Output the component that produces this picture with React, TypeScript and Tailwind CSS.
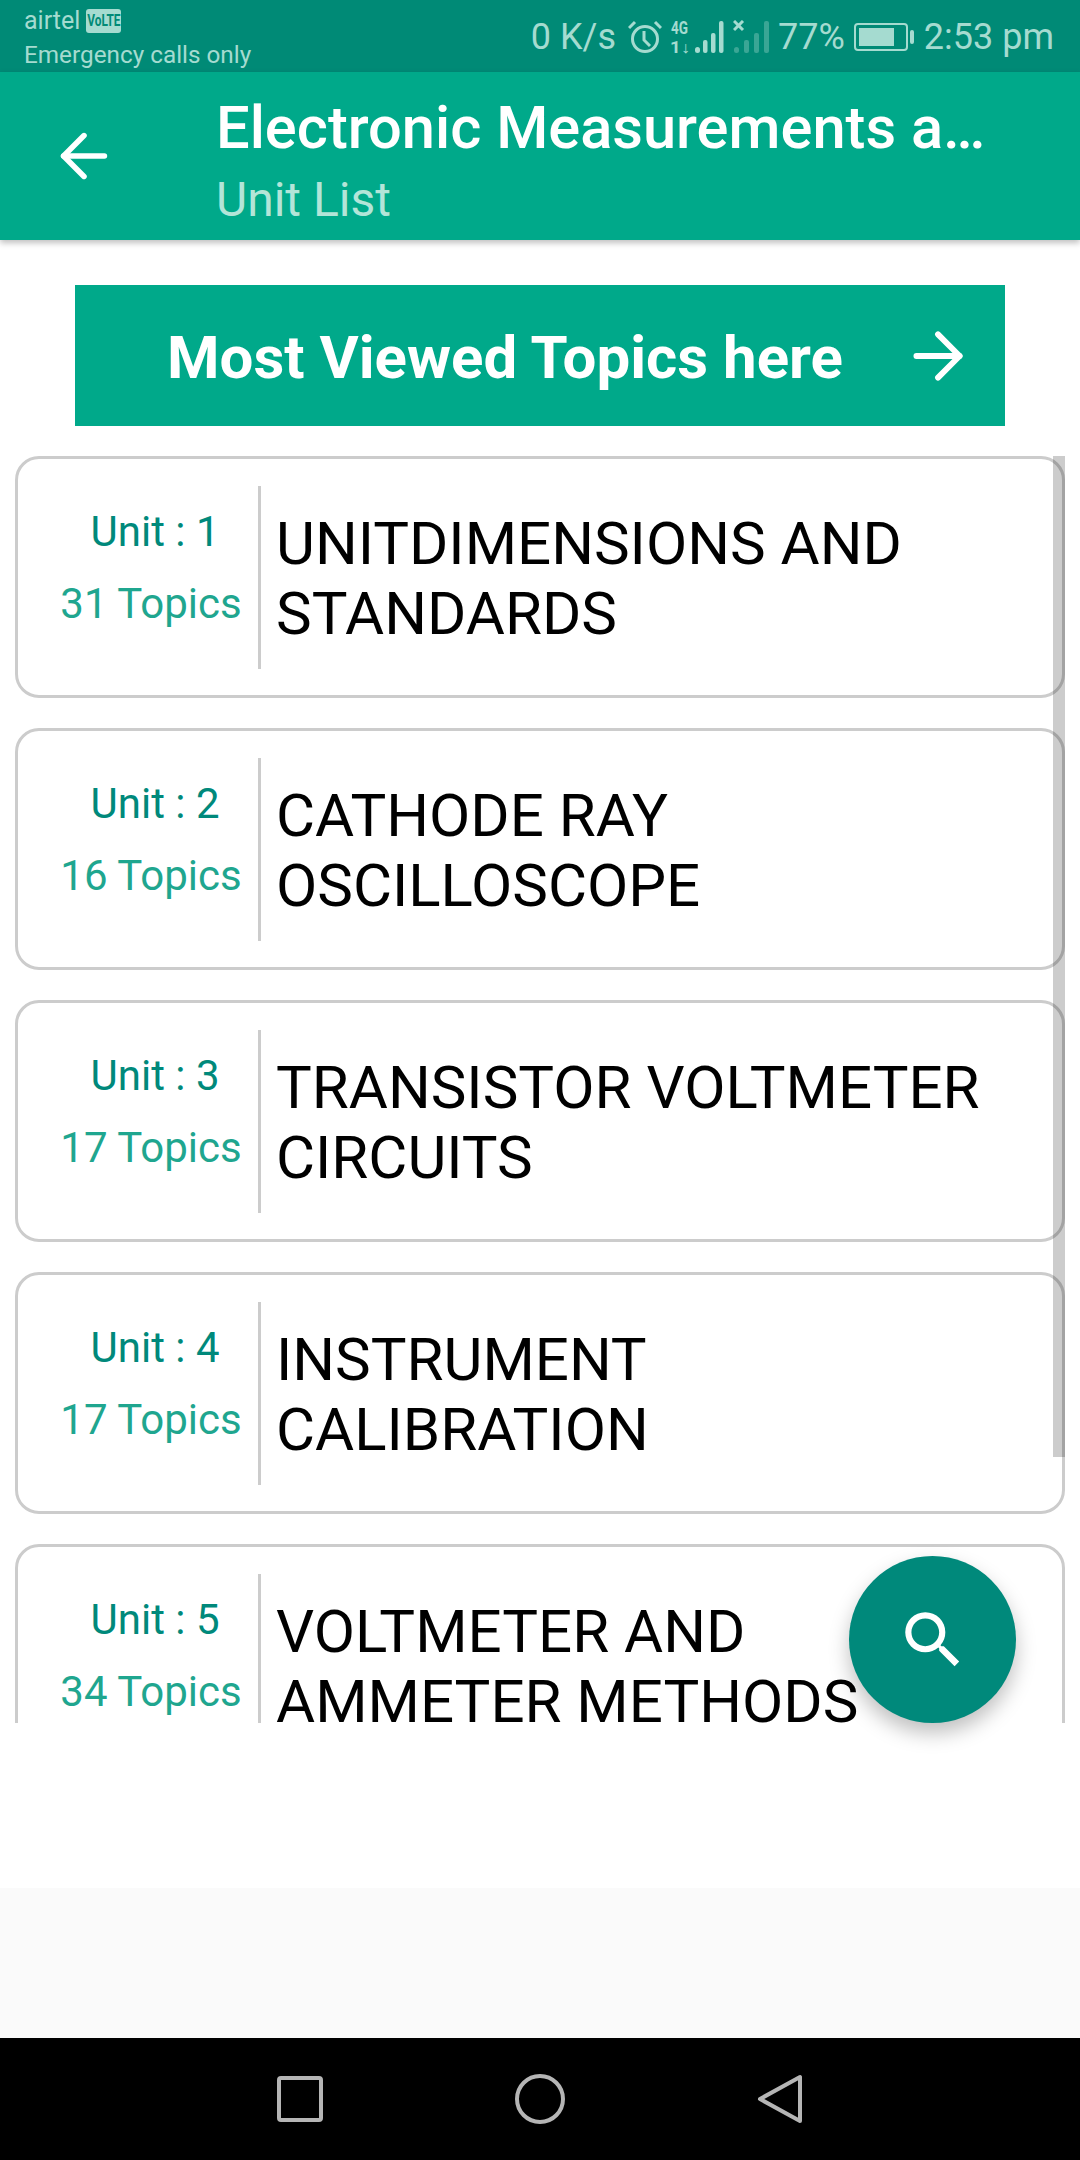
import { ArrowLeft, ArrowRight } from "lucide-react";

const units = [
    { unit: 1, topics: 31, title: "UNITDIMENSIONS AND STANDARDS" },
    { unit: 2, topics: 16, title: "CATHODE RAY OSCILLOSCOPE" },
    { unit: 3, topics: 17, title: "TRANSISTOR VOLTMETER CIRCUITS" },
    { unit: 4, topics: 17, title: "INSTRUMENT CALIBRATION" },
    { unit: 5, topics: 34, title: "VOLTMETER AND AMMETER METHODS" },
];

function StatusIcons() {
    return (
        <div className="flex items-center">
            {/* alarm */}
            <svg width="34" height="34" viewBox="0 0 34 34" fill="none" stroke="#a5dbd0" strokeWidth="3" className="ml-[12px]">
                <circle cx="17" cy="19" r="12.5" />
                <path d="M16 11v9l6 6M1 8l6-6M33 8l-6-6" />
            </svg>
            {/* 4G signal */}
            <svg width="54" height="34" viewBox="0 0 54 34" className="ml-[8px]" fill="#a5dbd0">
                <text x="1" y="14" fontSize="19" fontWeight="700" fontFamily="Roboto, sans-serif" textLength="17" lengthAdjust="spacingAndGlyphs">4G</text>
                <text x="0" y="33" fontSize="16" fontWeight="700" fontFamily="Roboto, sans-serif" textLength="20" lengthAdjust="spacingAndGlyphs">1↓</text>
                <rect x="25" y="27" width="5" height="6" rx="2.5" />
                <rect x="33" y="20" width="4.5" height="13" rx="2" />
                <rect x="41" y="13" width="4.5" height="20" rx="2" />
                <rect x="49" y="1" width="4.5" height="32" rx="2" />
            </svg>
            {/* second signal, no sim */}
            <svg width="38" height="34" viewBox="0 0 38 34" className="ml-[9px]" fill="#a5dbd0">
                <path d="M1 1l9 9M10 1l-9 9" stroke="#a5dbd0" strokeWidth="3" />
                <g opacity="0.35">
                    <rect x="1" y="27" width="5" height="6" rx="2.5" />
                    <rect x="11" y="20" width="5" height="13" rx="2" />
                    <rect x="21" y="13" width="5" height="20" rx="2" />
                    <rect x="31" y="1" width="5" height="32" rx="2" />
                </g>
            </svg>
        </div>
    );
}

function StatusBar() {
    return (
        <div className="flex h-[72px] items-center justify-between bg-[#008a76] pr-[26px] pl-6 text-[#a5dbd0]">
            <div className="flex flex-col">
                <div className="flex h-[36px] items-center text-[25px] leading-none">
                    airtel
                    <span className="ml-[6px] flex h-[24px] w-[35px] items-center justify-center rounded-[3px] bg-[#a5dbd0] text-[17px] leading-none font-bold text-[#008a76]">
                        <span className="scale-x-[0.7] whitespace-nowrap">VoLTE</span>
                    </span>
                </div>
                <div className="mt-[1px] text-[24.3px] leading-[30px]">Emergency calls only</div>
            </div>
            <div className="flex items-center pt-[2px] text-[36px] leading-none">
                <span>0 K/s</span>
                <StatusIcons />
                <span className="ml-[7px]">77%</span>
                <div className="ml-[9px] flex items-center">
                    <div className="h-[28px] w-[54px] rounded-[4px] border-2 border-[#a5dbd0] p-[3px]">
                        <div className="h-full w-[35px] bg-[#a5dbd0]" />
                    </div>
                    <div className="ml-[2px] h-[14px] w-[4px] rounded-sm bg-[#a5dbd0]" />
                </div>
                <span className="ml-[10px]">2:53 pm</span>
            </div>
        </div>
    );
}

function AppBar() {
    return (
        <div className="relative z-10 flex h-[168px] items-center bg-[#00a98a] shadow-[0_3px_6px_rgba(0,0,0,0.25)]">
            <div className="flex w-[216px] shrink-0 pl-[49px]">
                <ArrowLeft size={70} color="#ffffff" strokeWidth={1.9} />
            </div>
            <div className="min-w-0 pt-[11px]">
                <div className="text-[59.6px] leading-[70px] font-medium whitespace-nowrap text-white">
                    Electronic Measurements a…
                </div>
                <div className="mt-[7px] text-[48px] leading-[60px] text-[#b3e5d8]">Unit List</div>
            </div>
        </div>
    );
}

function UnitCard({ unit, topics, title }: { unit: number; topics: number; title: string }) {
    return (
        <div className="mx-[15px] mb-[30px] flex h-[242px] shrink-0 items-center rounded-[24px] border-[3px] border-[#cccccc] bg-white">
            <div className="w-[240px] shrink-0 pb-[18px] pl-[26px] text-center text-[42px] whitespace-nowrap">
                <div className="pl-[8px] leading-[50px] text-[#00897b]">Unit : {unit}</div>
                <div className="mt-[22px] leading-[50px] text-[#1fa68f]">{topics} Topics</div>
            </div>
            <div className="h-[183px] w-[3px] shrink-0 bg-[#cccccc]" />
            <div className="pt-[4px] pr-[60px] pl-[15px] text-[60px] leading-[70px] text-black">{title}</div>
        </div>
    );
}

export default function App() {
    return (
        <div className="flex h-[2160px] w-[1080px] flex-col overflow-hidden bg-white font-['Roboto',sans-serif]">
            <StatusBar />
            <AppBar />
            <div className="px-[75px] pt-[45px]">
                <div className="flex h-[141px] items-center bg-[#00a98a] pr-[30px] pl-[92px] text-white">
                    <span className="pt-[5px] text-[60px] font-bold whitespace-nowrap">Most Viewed Topics here</span>
                    <ArrowRight size={74} strokeWidth={1.9} className="ml-auto" />
                </div>
            </div>
            <div className="relative mt-[30px] flex h-[1267px] shrink-0 flex-col overflow-hidden">
                {units.map((u) => (
                    <UnitCard key={u.unit} {...u} />
                ))}
                <div className="absolute top-0 right-[15px] h-[1001px] w-[12px] bg-black/20" />
            </div>
            <div className="relative flex-1 bg-white">
                <div className="absolute top-[-167px] left-[849px] flex h-[167px] w-[167px] items-center justify-center rounded-full bg-[#00897b] shadow-[0_10px_20px_rgba(0,0,0,0.25)]">
                    <svg width="74" height="74" viewBox="0 0 24 24" fill="#ffffff">
                        <path d="M15.5 14h-.79l-.28-.27A6.47 6.47 0 0 0 16 9.5 6.5 6.5 0 1 0 9.5 16c1.61 0 3.09-.59 4.23-1.57l.27.28v.79l5 4.99L20.49 19l-4.99-5zm-6 0C7.01 14 5 11.99 5 9.5S7.01 5 9.5 5 14 7.01 14 9.5 11.99 14 9.5 14z" />
                    </svg>
                </div>
            </div>
            <div className="h-[150px] shrink-0 bg-[#fafafa]" />
            <div className="flex h-[122px] shrink-0 items-center justify-center gap-[192px] bg-black">
                <svg width="46" height="46" viewBox="0 0 46 46" fill="none" stroke="#b5b5b5" strokeWidth="4">
                    <rect x="2" y="2" width="42" height="42" rx="2" />
                </svg>
                <svg width="50" height="50" viewBox="0 0 50 50" fill="none" stroke="#b5b5b5" strokeWidth="4">
                    <circle cx="25" cy="25" r="23" />
                </svg>
                <svg width="46" height="50" viewBox="0 0 46 50" fill="none" stroke="#b5b5b5" strokeWidth="4" strokeLinejoin="round">
                    <path d="M43 3v44L3 25z" />
                </svg>
            </div>
        </div>
    );
}
